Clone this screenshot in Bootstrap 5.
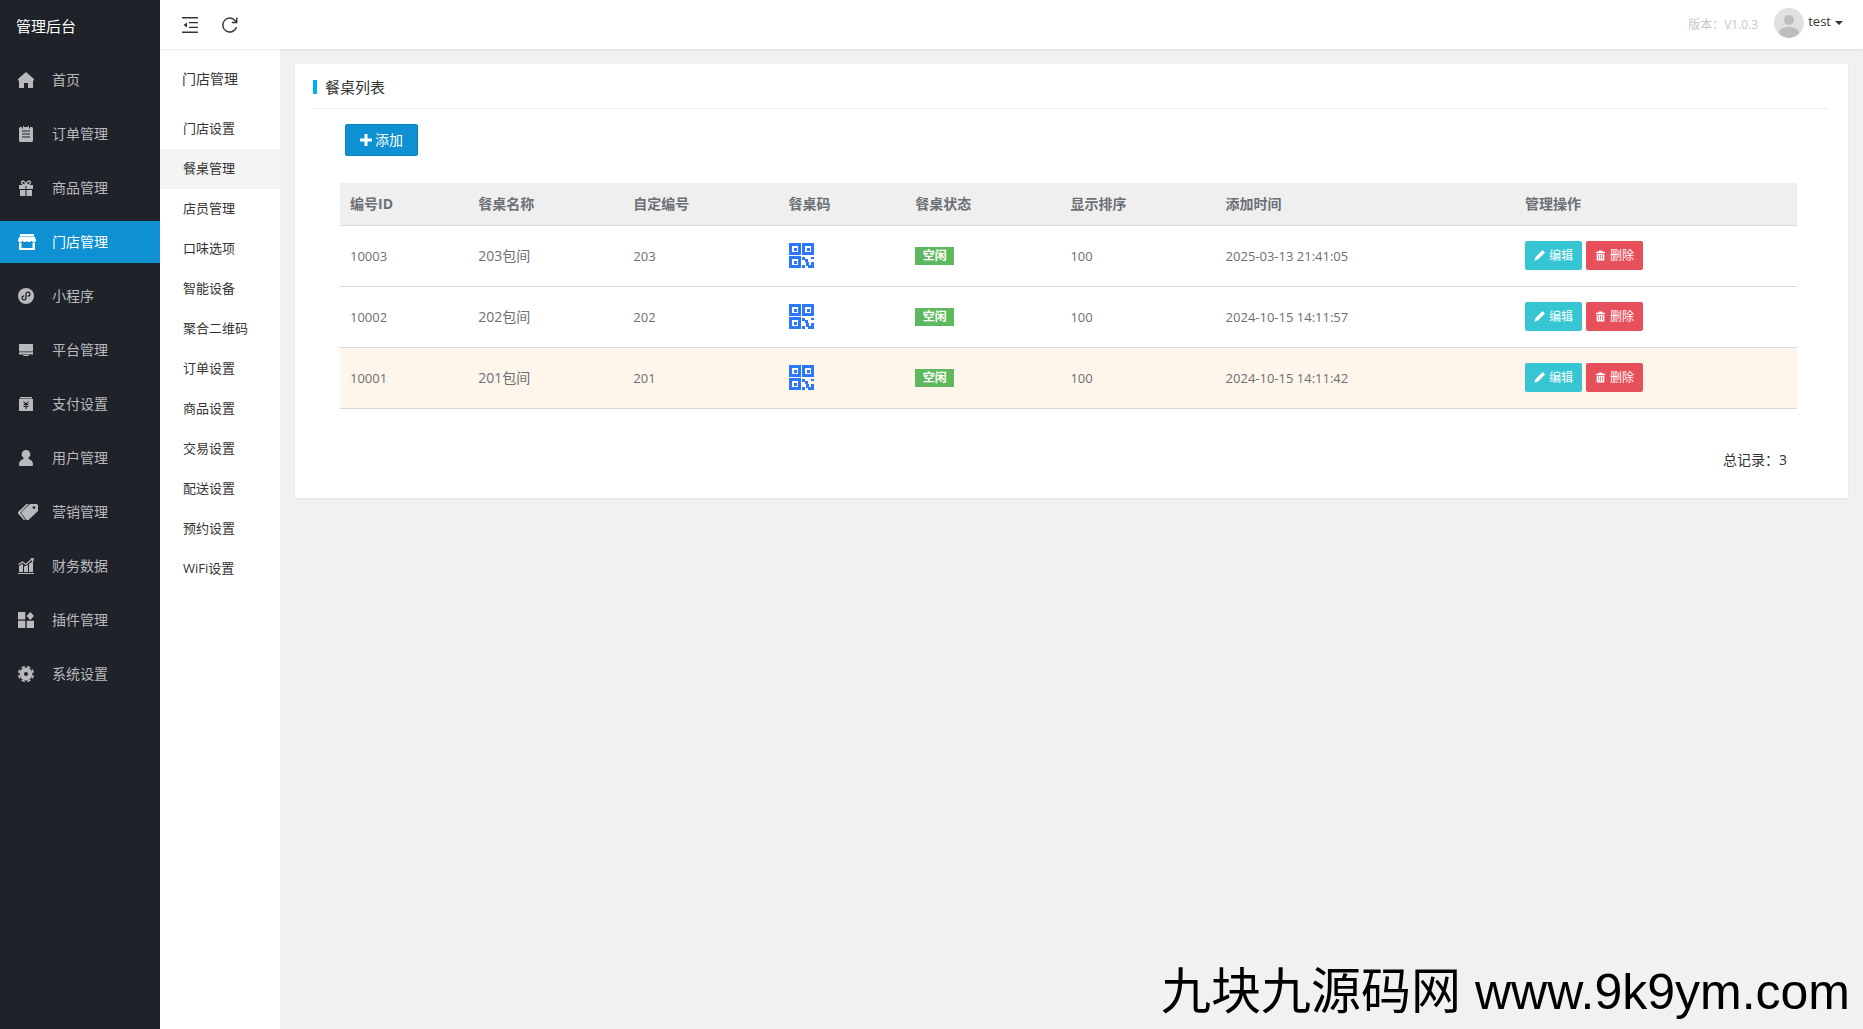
<!DOCTYPE html>
<html lang="zh-CN">
<head>
<meta charset="utf-8">
<meta name="viewport" content="width=device-width, initial-scale=1">
<title>餐桌列表 - 管理后台</title>
<link rel="stylesheet" href="https://cdn.jsdelivr.net/npm/bootstrap@5.3.0/dist/css/bootstrap.min.css">
<style>
  body { font-family: "Open Sans", "Noto Sans CJK SC", sans-serif; font-size: 14px; line-height: 20px; color: #333; background: #f1f1f1; }
  a { text-decoration: none; }
  svg { display: block; flex: none; overflow: visible; }

  .side-main { width: 160px; background: #20222a; }
  .side-brand { height: 50px; padding: 2px 16px 0; font-size: 15px; color: #fff; }
  .side-nav { padding-top: 9px; gap: 12px; }
  .side-nav a { display: flex; align-items: center; height: 42px; padding-left: 18px; color: #b9babd; }
  .side-nav a.active { background: #0e90d2; color: #fff; }
  .side-nav .ico { width: 34px; }

  .topbar { height: 49px; background: #fff; box-shadow: 0 1px 2px rgba(0, 0, 0, .08); z-index: 2; padding: 0 20px 0 22px; }
  .tool-btn { border: 0; background: none; padding: 0; color: #333; }
  .topbar .ver { font-size: 12px; color: #c8c8c8; }
  .user-btn { border: 0; background: none; padding: 0; font-size: 13px; color: #333; }

  .side-sub { width: 120px; background: #fff; }
  .sub-title { height: 60px; padding-left: 22px; }
  .side-sub a { display: flex; align-items: center; height: 40px; padding: 0 0 2px 23px; font-size: 13px; color: #333; }
  .side-sub a.active { background: #f4f4f4; }

  .page-main { padding: 15px; }
  .panel { background: #fff; box-shadow: 0 1px 2px rgba(0, 0, 0, .06); padding: 0 18px 28px; }
  .panel-head { height: 45px; padding-top: 2px; margin-right: 1px; border-bottom: 1px solid #efefef; }
  .panel-head h1 { font-size: 15px; line-height: 20px; font-weight: 400; }
  .panel-head .bar { width: 4px; height: 14px; background: #00aeff; margin-right: 8px; }
  .panel-body { padding: 15px 33px 0 27px; }
  .btn-add { --bs-btn-color: #fff; --bs-btn-bg: #0e90d2; --bs-btn-border-color: #0c80ba; --bs-btn-hover-color: #fff; --bs-btn-hover-bg: #0c80ba;
    --bs-btn-border-radius: 2px; height: 32px; font-size: 14px; line-height: 20px; padding: 0 14px; gap: 3px; margin-left: 5px; }
  .desk-table { --bs-table-color: #6c7075; color: #6c7075; border-color: #dadada; margin: 27px 0 0; table-layout: fixed; }
  .desk-table th, .desk-table td { padding: 0 10px; vertical-align: middle; }
  .desk-table th { height: 42px; background: #efefef; }
  .desk-table td { height: 61px; }
  .desk-table .num { font-size: 13px; }
  .desk-table tr.hl td { background: #fef5eb; }
  .state-tag { display: block; width: 39px; border-radius: 0; background: #5eb95e; font-size: 12px; line-height: 18px; padding: 0; height: 18px; }
  .btn-op { --bs-btn-border-radius: 2px; --bs-btn-border-width: 0; font-size: 12px; line-height: 18px; height: 29px; padding: 0 9px; gap: 4px; }
  .btn-op-edit { --bs-btn-color: #fff; --bs-btn-bg: #36c6d3; --bs-btn-hover-color: #fff; --bs-btn-hover-bg: #27a4b0; }
  .btn-op-del { --bs-btn-color: #fff; --bs-btn-bg: #e7505a; --bs-btn-hover-color: #fff; --bs-btn-hover-bg: #e12330; }
  .total { padding: 41px 10px 0 0; }

  .site-mark { position: fixed; right: 13px; bottom: 3px; font-family: "Liberation Sans", "Noto Sans CJK SC", sans-serif; font-size: 50px; line-height: 68px; color: #000; pointer-events: none; white-space: nowrap; }
</style>
</head>
<body>
<!-- shared symbols for the table -->
<svg width="0" height="0" class="position-absolute" aria-hidden="true">
  <symbol id="qr" viewBox="0 0 26 26">
    <path fill="#2b78ff" fill-rule="evenodd" d="M0 0h12v12H0zM3 3v6h6V3zM13 0h12v12H13zM16 3v6h6V3zM0 13h12v12H0zM3 16v6h6v-6z"/>
    <path fill="#2b78ff" d="M5 5h3v3H5zM18 5h3v3h-3zM5 18h3v3H5zM13 14h3v2h3v3h1v4h-3v-4h-1v-2h-3zM22 14h3v2h-3zM13 22h3v3h-3zM22 19h3v6h-6v-3h3z"/>
  </symbol>
  <symbol id="pen" viewBox="0 0 12 12"><path fill="currentColor" d="M8.600.800a1.200 1.200 0 0 1 1.700 0l1 1a1.200 1.200 0 0 1 0 1.700l-6.700 6.700L.4 11.700l1.300-4.200z"/></symbol>
  <symbol id="bin" viewBox="0 0 11 12"><path fill="currentColor" fill-rule="evenodd" d="M4 .5h3L8 2h2.500v1.300H.5V2H3zM1.300 4h8.400v6.500a1 1 0 0 1-1 1H2.300a1 1 0 0 1-1-1zM3.200 5v5h.7V5zM5.200 5v5h.7V5zM7.200 5v5h.7V5z"/></symbol>
</svg>

<div class="d-flex min-vh-100">
  <aside class="side-main flex-shrink-0">
    <div class="side-brand d-flex align-items-center">管理后台</div>
    <nav class="side-nav d-flex flex-column" aria-label="主菜单">
      <a href="#"><span class="ico"><svg width="16" height="16" viewBox="0 0 16 16" fill="currentColor"><path d="M8 0l8 7v1.500h-1V16H10v-5H6v5H1V8.500H0V7z"/></svg></span>首页</a>
      <a href="#"><span class="ico"><svg width="16" height="16" viewBox="0 0 16 16" fill="currentColor"><path fill-rule="evenodd" d="M2 1h2v1.500h1V0h1v1h4V0h1v2.500h1V1h2l1 1v13l-1 1H2l-1-1V2zM4 4.500v1h8v-1zM4 7.500v1h8v-1zM4 10.500v1h8v-1z"/></svg></span>订单管理</a>
      <a href="#"><span class="ico"><svg width="16" height="16" viewBox="0 0 16 16" fill="currentColor"><path d="M1 5h14v4H8.500V6h-1v3H1zM2 10h5.500v6H2zM8.500 10H14v6H8.500z"/><path fill="none" stroke="currentColor" stroke-width="1.400" d="M8 5C6 5 3.500 4 3.500 2.300S6.800 0 8 5c1.200-5 4.500-4.400 4.500-2.700S10 5 8 5z"/></svg></span>商品管理</a>
      <a href="#" class="active" aria-current="true"><span class="ico"><svg width="18" height="16" viewBox="0 0 18 16" fill="currentColor"><path d="M2 0h14v2H2zM1.500 2.500h15L18 6c0 1.500-.8 2.200-2 2.200S14 7.500 13.500 6.800C13 7.600 12.500 8 11.300 8S9.500 7.600 9 6.900C8.500 7.600 8 8 6.700 8S5 7.600 4.500 6.800C4 7.500 3.200 8.200 2 8.200S0 7.500 0 6z"/><path fill-rule="evenodd" d="M1 8.500l2.500.3V14h11V8.800l2.500-.3V16H1z"/></svg></span>门店管理</a>
      <a href="#"><span class="ico"><svg width="16" height="16" viewBox="0 0 16 16"><circle cx="8" cy="8" r="8" fill="currentColor"/><path fill="none" stroke="#20222a" stroke-width="1.300" stroke-linecap="round" d="M5.600 8A2 2 0 1 0 8 10V6a2 2 0 1 1 2.400 2"/></svg></span>小程序</a>
      <a href="#"><span class="ico"><svg width="16" height="16" viewBox="0 0 16 16" fill="currentColor"><path d="M1 2h14v7.500H1zM1 10.200h14v2.300H1zM5.500 13h5l.5 1H5z"/></svg></span>平台管理</a>
      <a href="#"><span class="ico"><svg width="16" height="16" viewBox="0 0 16 16"><path fill="currentColor" d="M2 1h12v1.500H2zM1 3h14v12H1z"/><path fill="none" stroke="#20222a" stroke-width="1.100" d="M5.500 5.500L8 8.300l2.500-2.800M5.500 8.500h5M5.500 10.500h5M8 8v5"/></svg></span>支付设置</a>
      <a href="#"><span class="ico"><svg width="16" height="16" viewBox="0 0 16 16" fill="currentColor"><path d="M8 0a4.300 4.300 0 0 1 2.500 7.800V9c3 .8 4.500 2.800 4.500 5.500 0 1-.5 1.500-1.500 1.500h-11C1.500 16 1 15.500 1 14.500 1 11.800 2.500 9.800 5.500 9V7.800A4.300 4.300 0 0 1 8 0z"/></svg></span>用户管理</a>
      <a href="#"><span class="ico"><svg width="20" height="16" viewBox="0 0 20 16" fill="currentColor"><path fill-rule="evenodd" d="M12 0h6.500L20 1v6l-9.500 9H8.500L3.500 9.500V8zM16 2.200a1.400 1.400 0 1 0 0 2.800 1.400 1.400 0 0 0 0-2.800z"/><path d="M8.500 0h2.300L2.300 8.700 7.500 16H5.800L0 9.500V8z"/></svg></span>营销管理</a>
      <a href="#"><span class="ico"><svg width="16" height="16" viewBox="0 0 16 16" fill="currentColor"><path d="M0 15h16v1H0zM1 8l3-2 1 1v7H1zM6 8.500l4-1.500v7H6zM11 6l4-3v11h-4z"/><path fill="none" stroke="currentColor" stroke-width="1.200" d="M.5 6.500l4-2.500 3.500 2.500L14 1"/><path d="M12 .5l4-.5-.8 4z"/></svg></span>财务数据</a>
      <a href="#"><span class="ico"><svg width="16" height="16" viewBox="0 0 16 16" fill="currentColor"><path d="M0 0h7.300v7.500H0zM0 8.700h7.300V16H0zM8.700 8.700H16V16H8.700zM12.300 0L16 4l-3.700 4-3.800-4z"/></svg></span>插件管理</a>
      <a href="#"><span class="ico"><svg width="16" height="16" viewBox="0 0 16 16"><circle cx="8" cy="8" r="4.200" fill="none" stroke="currentColor" stroke-width="4.400"/><path stroke="currentColor" stroke-width="3.400" d="M5.500 2L4.900.500M10.500 2l.6-1.500M5.500 14l-.6 1.500M10.500 14l.6 1.500M2 5.500L.5 4.900M14 5.500l1.500-.6M2 10.500l-1.500.6M14 10.500l1.500.6"/></svg></span>系统设置</a>
    </nav>
  </aside>

  <div class="d-flex flex-column flex-grow-1">
    <header class="topbar d-flex align-items-center position-relative">
      <button type="button" class="tool-btn" aria-label="收起菜单"><svg width="16" height="16" viewBox="0 0 16 16" fill="currentColor"><path d="M0 0h16v1.500H0zM7 5h9v1.300H7zM7 9.700h9V11H7zM0 14.500h16V16H0zM5 5.500v5L1.500 8z"/></svg></button>
      <button type="button" class="tool-btn ms-4" aria-label="刷新"><svg width="16" height="16" viewBox="0 0 16 16" fill="none" stroke="currentColor" stroke-width="1.400"><path d="M14.500 10A7 7 0 1 1 13.500 4L14.500 5.300M14.800.5v5h-5"/></svg></button>
      <span class="ver ms-auto">版本：V1.0.3</span>
      <div class="dropdown ms-3 pb-1">
        <button type="button" class="user-btn d-flex align-items-center" data-bs-toggle="dropdown" aria-expanded="false">
          <svg width="30" height="30" viewBox="0 0 30 30"><circle cx="15" cy="15" r="15" fill="#e0e0e0"/><circle cx="15" cy="12" r="5" fill="#bdbdbd"/><path fill="#bdbdbd" d="M5 25c0-4 4.500-6 10-6s10 2 10 6c-5.500 6.500-14.500 6.500-20 0z"/></svg>
          <span class="ms-1 me-1 pb-1">test</span>
          <svg width="8" height="4" viewBox="0 0 8 4"><path fill="currentColor" d="M0 0h8L4 4z"/></svg>
        </button>
        <ul class="dropdown-menu dropdown-menu-end"></ul>
      </div>
    </header>

    <div class="d-flex flex-grow-1">
      <nav class="side-sub flex-shrink-0" aria-label="门店管理">
        <div class="sub-title d-flex align-items-center">门店管理</div>
        <a href="#">门店设置</a>
        <a href="#" class="active" aria-current="page">餐桌管理</a>
        <a href="#">店员管理</a>
        <a href="#">口味选项</a>
        <a href="#">智能设备</a>
        <a href="#">聚合二维码</a>
        <a href="#">订单设置</a>
        <a href="#">商品设置</a>
        <a href="#">交易设置</a>
        <a href="#">配送设置</a>
        <a href="#">预约设置</a>
        <a href="#">WiFi设置</a>
      </nav>

      <main class="page-main flex-grow-1">
        <section class="panel">
          <div class="panel-head d-flex align-items-center"><span class="bar"></span><h1 class="m-0">餐桌列表</h1></div>
          <div class="panel-body">
            <button type="button" class="btn btn-add d-inline-flex align-items-center"><svg width="12" height="12" viewBox="0 0 12 12"><path fill="currentColor" d="M4.500 0h3v4.500H12v3H7.500V12h-3V7.500H0v-3h4.500z"/></svg>添加</button>
            <table class="table desk-table">
              <colgroup>
                <col style="width:8.8%"><col style="width:10.65%"><col style="width:10.65%"><col style="width:8.7%"><col style="width:10.65%"><col style="width:10.65%"><col style="width:20.55%"><col style="width:19.35%">
              </colgroup>
              <thead>
                <tr><th>编号ID</th><th>餐桌名称</th><th>自定编号</th><th>餐桌码</th><th>餐桌状态</th><th>显示排序</th><th>添加时间</th><th>管理操作</th></tr>
              </thead>
              <tbody>
                <tr>
                  <td class="num">10003</td><td>203包间</td><td class="num">203</td>
                  <td><a href="#" aria-label="餐桌码"><svg width="26" height="26"><use href="#qr"/></svg></a></td>
                  <td><span class="badge state-tag">空闲</span></td><td class="num">100</td><td class="num">2025-03-13 21:41:05</td>
                  <td><div class="d-flex gap-1"><button type="button" class="btn btn-op btn-op-edit d-flex align-items-center"><svg width="11" height="11"><use href="#pen"/></svg>编辑</button><button type="button" class="btn btn-op btn-op-del d-flex align-items-center"><svg width="11" height="11"><use href="#bin"/></svg>删除</button></div></td>
                </tr>
                <tr>
                  <td class="num">10002</td><td>202包间</td><td class="num">202</td>
                  <td><a href="#" aria-label="餐桌码"><svg width="26" height="26"><use href="#qr"/></svg></a></td>
                  <td><span class="badge state-tag">空闲</span></td><td class="num">100</td><td class="num">2024-10-15 14:11:57</td>
                  <td><div class="d-flex gap-1"><button type="button" class="btn btn-op btn-op-edit d-flex align-items-center"><svg width="11" height="11"><use href="#pen"/></svg>编辑</button><button type="button" class="btn btn-op btn-op-del d-flex align-items-center"><svg width="11" height="11"><use href="#bin"/></svg>删除</button></div></td>
                </tr>
                <tr class="hl">
                  <td class="num">10001</td><td>201包间</td><td class="num">201</td>
                  <td><a href="#" aria-label="餐桌码"><svg width="26" height="26"><use href="#qr"/></svg></a></td>
                  <td><span class="badge state-tag">空闲</span></td><td class="num">100</td><td class="num">2024-10-15 14:11:42</td>
                  <td><div class="d-flex gap-1"><button type="button" class="btn btn-op btn-op-edit d-flex align-items-center"><svg width="11" height="11"><use href="#pen"/></svg>编辑</button><button type="button" class="btn btn-op btn-op-del d-flex align-items-center"><svg width="11" height="11"><use href="#bin"/></svg>删除</button></div></td>
                </tr>
              </tbody>
            </table>
            <div class="total text-end">总记录：3</div>
          </div>
        </section>
      </main>
    </div>
  </div>
</div>
<div class="site-mark">九块九源码网 www.9k9ym.com</div>
<script src="https://cdn.jsdelivr.net/npm/bootstrap@5.3.0/dist/js/bootstrap.bundle.min.js"></script>
</body>
</html>
